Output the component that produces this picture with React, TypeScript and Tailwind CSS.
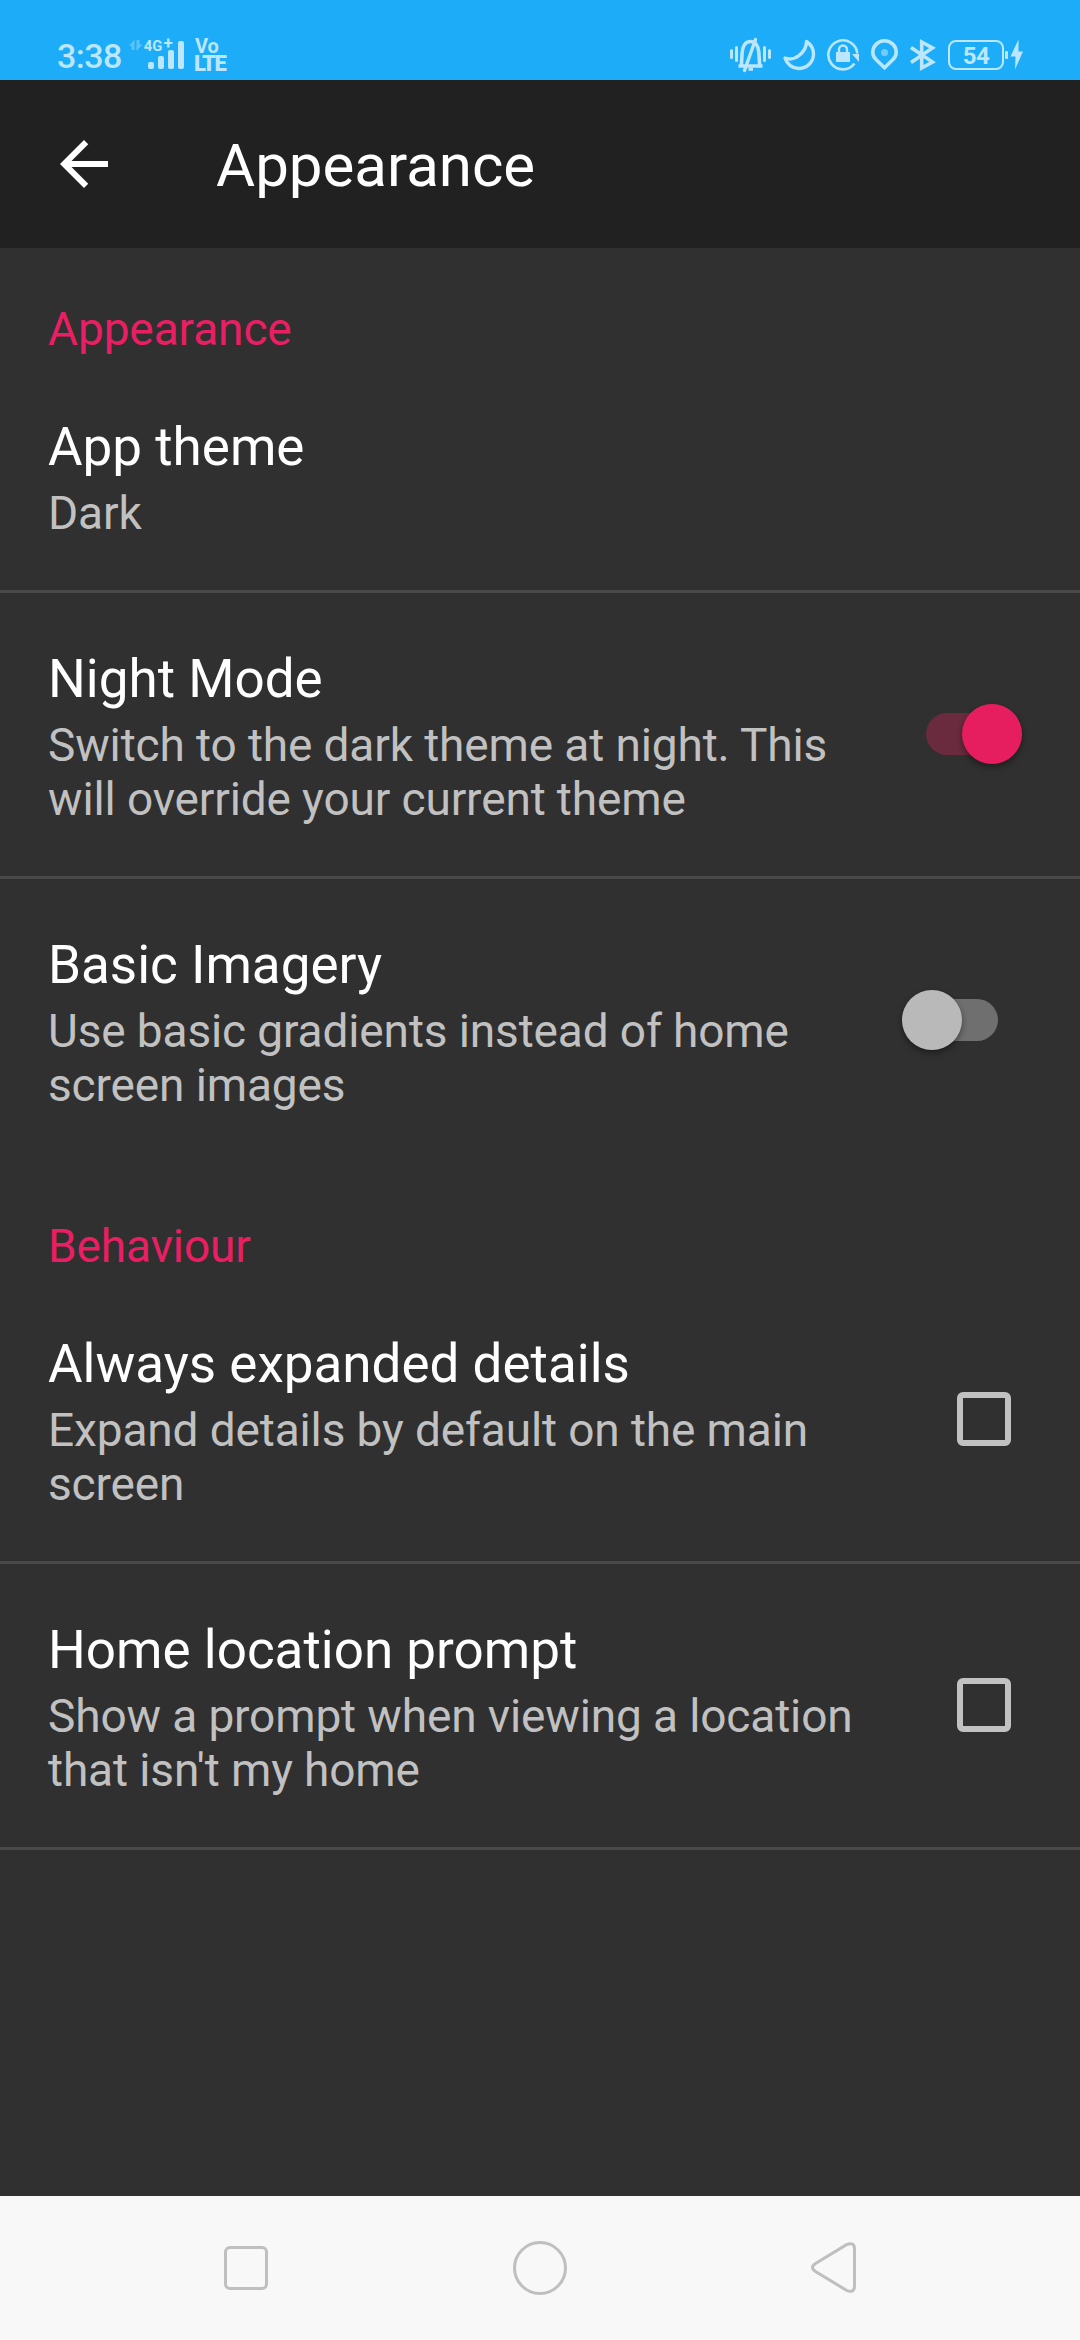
import React from "react";
import clsx from "clsx";

type Control = "none" | "switch" | "checkbox";

interface PreferenceItem {
  title: string;
  lines: string[];
  control: Control;
  checked?: boolean;
}

interface PreferenceGroup {
  name: string;
  items: PreferenceItem[];
}

const groups: PreferenceGroup[] = [
  {
    name: "Appearance",
    items: [
      { title: "App theme", lines: ["Dark"], control: "none" },
      {
        title: "Night Mode",
        lines: ["Switch to the dark theme at night. This", "will override your current theme"],
        control: "switch",
        checked: true,
      },
      {
        title: "Basic Imagery",
        lines: ["Use basic gradients instead of home", "screen images"],
        control: "switch",
        checked: false,
      },
    ],
  },
  {
    name: "Behaviour",
    items: [
      {
        title: "Always expanded details",
        lines: ["Expand details by default on the main", "screen"],
        control: "checkbox",
      },
      {
        title: "Home location prompt",
        lines: ["Show a prompt when viewing a location", "that isn't my home"],
        control: "checkbox",
      },
    ],
  },
];

// Signal strength with the network type above the short bars
const SignalIcon = () => (
  <svg className="ml-[7px] h-9 w-[58px] overflow-visible" viewBox="128 37 58 36" fill="currentColor">
    <g opacity="0.4">
      <path d="M129 46l5.5-6.5V50h-3v-4z" />
      <path d="M136.5 40h3v4.5h3L136.5 51z" />
    </g>
    <text fontSize="14.8" fontWeight="700" fontFamily="Roboto, sans-serif">
      <tspan x="143.8" y="51">4G</tspan>
      <tspan x="163.5" y="49" fontSize="17">+</tspan>
    </text>
    <rect x="148" y="62" width="6" height="7" rx="2" />
    <rect x="158" y="56" width="6" height="13" rx="2" />
    <rect x="168" y="50" width="6" height="19" rx="2" />
    <rect x="178" y="41" width="6" height="28" rx="2" />
  </svg>
);

const VolteIcon = () => (
  <svg
    className="ml-2 h-9 w-[34px] overflow-visible"
    viewBox="194 37 34 36"
    fill="currentColor"
    fontFamily="Roboto, sans-serif"
  >
    <text fontWeight="700">
      <tspan x="195" y="52.5" fontSize="20">Vo</tspan>
      <tspan x="194" y="71" fontSize="22" fontWeight="900" letterSpacing="-1.6">LTE</tspan>
    </text>
  </svg>
);

const VibrateIcon = () => (
  <svg className="h-9 w-[44px]" viewBox="729 37 44 36" fill="none" stroke="currentColor">
    <g strokeWidth="3" strokeLinecap="round">
      <path d="M731.5 50.5v7M736.5 47.5v13M764.5 47.5v13M769.5 50.5v7" />
    </g>
    <path d="M738.5 66h24M741.3 66l.9-14c.5-6 3.3-10.500 8.300-10.500s7.800 4.500 8.300 10.500l.9 14" strokeWidth="3.6" />
    <path d="M744.5 70.500L755.5 39.500" strokeWidth="3.4" strokeLinecap="round" />
    <path d="M748.5 69.300h4.500" strokeWidth="3" />
  </svg>
);

const MoonIcon = () => (
  <svg className="ml-[9px] h-9 w-[34px]" viewBox="782 37 34 36" fill="none" stroke="currentColor">
    <path
      d="M806.5 41.5c4.5 3 7 7.5 7 12.5 0 8-6.5 14.5-15 14.5-6 0-11.500-4-13.500-10.500 4 1.500 9.500 1 14-2.500 5-3.800 7.500-8.500 7.500-14z"
      strokeWidth="3.4"
      strokeLinejoin="round"
    />
  </svg>
);

const RotationLockIcon = () => (
  <svg className="ml-2.5 h-9 w-[34px]" viewBox="826 37 34 36" fill="none" stroke="currentColor">
    <path d="M857.3 53.5A14.5 14.5 0 1 0 854.5 63.5" strokeWidth="2.6" />
    <path d="M852 54h7v8z" fill="currentColor" stroke="none" />
    <rect x="836" y="52" width="14" height="10" fill="currentColor" stroke="none" />
    <path d="M839 53v-3.5a4 4 0 0 1 8 0V53" strokeWidth="2.4" />
  </svg>
);

const PinIcon = () => (
  <svg className="ml-[9px] h-9 w-[32px]" viewBox="869 37 32 36" fill="none" stroke="currentColor">
    <path
      d="M884.5 67.8l-8.500-8.300c-2-2-3.200-4.500-3.200-7.300 0-6.300 5.200-11.400 11.700-11.400s11.700 5.100 11.700 11.400c0 2.800-1.200 5.300-3.200 7.300z"
      strokeWidth="3.6"
    />
    <circle cx="884.5" cy="52.5" r="3.5" fill="currentColor" stroke="none" opacity="0.55" />
  </svg>
);

const BluetoothIcon = () => (
  <svg className="ml-2 h-9 w-[28px]" viewBox="909 37 28 36" fill="none" stroke="currentColor">
    <path d="M911 47.5l21.5 14.5-10.8 6V42l10.8 6L911 62.5" strokeWidth="3.6" />
  </svg>
);

const BoltIcon = () => (
  <svg className="h-9 w-[20px]" viewBox="1004 37 20 36" fill="currentColor">
    <rect x="1005" y="51" width="3" height="8" rx="1" />
    <path d="M1018.5 39.5l-8 17h5l-.5 13 8-18h-4.5z" />
  </svg>
);

const StatusBar = () => (
  <div className="flex h-20 shrink-0 items-center bg-[#1dacf8] pl-[57px] pr-[56px] pt-[30px] text-[#bbe6fd]">
    <span className="mt-0.5 w-[64px] text-[34px] font-medium leading-9 tracking-[-0.5px]">3:38</span>
    <SignalIcon />
    <VolteIcon />
    <div className="ml-auto flex items-center">
      <VibrateIcon />
      <MoonIcon />
      <RotationLockIcon />
      <PinIcon />
      <BluetoothIcon />
      <div className="ml-[11px] flex h-[30px] w-[56px] items-center justify-center rounded-[8px] border-2 border-current pt-px text-[24px] font-bold leading-none tracking-[-0.5px]">
        54
      </div>
      <BoltIcon />
    </div>
  </div>
);

const Toolbar = () => (
  <header className="flex h-[168px] shrink-0 items-center bg-[#212121] px-12 text-white">
    <svg className="size-[72px]" viewBox="0 0 24 24" fill="currentColor">
      <path d="M20 11H7.83l5.59-5.59L12 4l-8 8 8 8 1.41-1.41L7.83 13H20v-2z" />
    </svg>
    <h1 className="ml-24 mt-1 text-[60px] leading-[70px]">Appearance</h1>
  </header>
);

const Switch = ({ checked }: { checked?: boolean }) => (
  <div
    className={clsx(
      "mb-px flex h-[42px] w-24 items-center rounded-full",
      checked ? "mr-[58px] justify-end bg-[#6a2b3f]" : "mr-[82px] bg-[#6f6f6f]"
    )}
  >
    <div
      className={clsx(
        "size-[60px] shrink-0 rounded-full shadow-[0_3px_6px_rgba(0,0,0,0.4)]",
        checked ? "bg-[#e61e5f]" : "bg-[#b9b9b9]"
      )}
    />
  </div>
);

const Checkbox = () => <div className="mb-px mr-[69px] size-[54px] rounded-[6px] border-6 border-[#c1c1c1]" />;

const PreferenceRow = ({ item, divider }: { item: PreferenceItem; divider: boolean }) => (
  <div
    className={clsx(
      "flex items-center justify-between border-b-3",
      divider ? "border-[#494949]" : "border-transparent"
    )}
  >
    <div className="pb-[50px] pl-12 pt-[55px]">
      <div className="text-[53px] leading-[62px] text-white">{item.title}</div>
      <div className="mt-2 text-[46px] leading-[54px] tracking-[-0.13px] text-[#c1c1c1]">
        {item.lines.map((line) => (
          <div key={line} className="whitespace-nowrap">{line}</div>
        ))}
      </div>
    </div>
    {item.control === "switch" && <Switch checked={item.checked} />}
    {item.control === "checkbox" && <Checkbox />}
  </div>
);

const NavBar = () => (
  <nav className="flex h-36 shrink-0 items-center justify-between bg-[#f8f8f8] pl-[224px] pr-[223px] text-[#bfbfbf]">
    <div className="size-[44px] rounded-[6px] border-3 border-current" />
    <div className="ml-px size-[54px] rounded-full border-3 border-current" />
    <svg className="h-[52px] w-[46px]" viewBox="0 0 46 52" fill="none" stroke="currentColor" strokeWidth="3">
      <path d="M4.5 21.5L35.5 2.7Q43.5-.5 43.5 7V44Q43.5 51.5 35.5 48.3L4.5 29.5Q-1.5 25.5 4.5 21.5z" />
    </svg>
  </nav>
);

const App: React.FC = () => {
  return (
    <div className="flex h-[2340px] w-[1080px] flex-col overflow-hidden bg-[#303030] font-['Roboto',sans-serif]">
      <StatusBar />
      <Toolbar />
      <main className="flex-1">
        {groups.map((group) => (
          <section key={group.name}>
            <h2 className="pb-[5px] pl-12 pt-[54px] text-[46px] leading-[54px] tracking-[-0.1px] text-[#e91e63]">
              {group.name}
            </h2>
            {group.items.map((item) => (
              // the last switch runs straight into the next category
              <PreferenceRow key={item.title} item={item} divider={item.title !== "Basic Imagery"} />
            ))}
          </section>
        ))}
      </main>
      <NavBar />
    </div>
  );
};

export default App;
